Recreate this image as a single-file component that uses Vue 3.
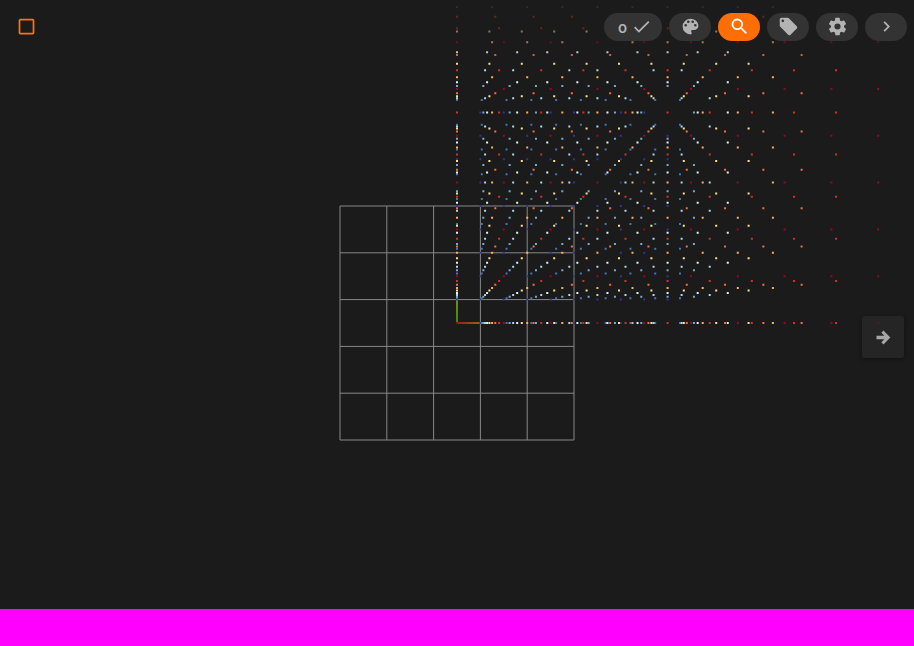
<script setup>
import { ref } from 'vue'

const SPAN = 421.2
const palette = [
  '#a50026', '#d73027', '#f46d43', '#fdae61', '#fee090',
  '#e0f3f8', '#abd9e9', '#74add1', '#4575b4', '#313695',
]

// One 10 x 10 lattice per colour. Where lattices share a position,
// the widest one keeps the point.
const taken = new Set()
const lattices = palette
  .map((color, n) => {
    const step = SPAN / (n + 9)
    let d = ''
    for (let i = 0; i < 10; i++) {
      for (let j = 0; j < 10; j++) {
        const x = (i * step - 1).toFixed(2)
        const y = (-j * step - 1).toFixed(2)
        const key = `${x} ${y}`
        if (taken.has(key)) continue
        taken.add(key)
        d += `M${key}h2v2h-2z`
      }
    }
    return { color, d }
  })
  .reverse()

const gridStops = [-117, -70.2, -23.4, 23.4, 70.2, 117]

const icons = {
  check: 'M21,7L9,19L3.5,13.5L4.91,12.09L9,16.17L19.59,5.59L21,7Z',
  palette:
    'M17.5,12A1.5,1.5 0 0,1 16,10.5A1.5,1.5 0 0,1 17.5,9A1.5,1.5 0 0,1 19,10.5A1.5,1.5 0 0,1 17.5,12M14.5,8A1.5,1.5 0 0,1 13,6.5A1.5,1.5 0 0,1 14.5,5A1.5,1.5 0 0,1 16,6.5A1.5,1.5 0 0,1 14.5,8M9.5,8A1.5,1.5 0 0,1 8,6.5A1.5,1.5 0 0,1 9.5,5A1.5,1.5 0 0,1 11,6.5A1.5,1.5 0 0,1 9.5,8M6.5,12A1.5,1.5 0 0,1 5,10.5A1.5,1.5 0 0,1 6.5,9A1.5,1.5 0 0,1 8,10.5A1.5,1.5 0 0,1 6.5,12M12,3A9,9 0 0,0 3,12A9,9 0 0,0 12,21A1.5,1.5 0 0,0 13.5,19.5C13.5,19.11 13.35,18.76 13.11,18.5C12.88,18.23 12.73,17.88 12.73,17.5A1.5,1.5 0 0,1 14.23,16H16A5,5 0 0,0 21,11C21,6.58 16.97,3 12,3Z',
  search:
    'M15.5,14H14.71L14.43,13.73A6.5,6.5 0 1,0 13.73,14.43L14,14.71V15.5L19,20.49L20.49,19L15.5,14M9.5,14A4.5,4.5 0 1,1 14,9.5A4.5,4.5 0 0,1 9.5,14Z',
  tag: 'M5.5,7A1.5,1.5 0 0,1 4,5.5A1.5,1.5 0 0,1 5.5,4A1.5,1.5 0 0,1 7,5.5A1.5,1.5 0 0,1 5.5,7M21.41,11.58L12.41,2.58C12.05,2.22 11.55,2 11,2H4C2.89,2 2,2.89 2,4V11C2,11.55 2.22,12.05 2.59,12.41L11.58,21.41C11.95,21.77 12.45,22 13,22C13.55,22 14.05,21.77 14.41,21.41L21.41,14.41C21.78,14.05 22,13.55 22,13C22,12.44 21.77,11.94 21.41,11.58Z',
  cog: 'M12,15.5A3.5,3.5 0 0,1 8.5,12A3.5,3.5 0 0,1 12,8.5A3.5,3.5 0 0,1 15.5,12A3.5,3.5 0 0,1 12,15.5M19.43,12.97C19.47,12.65 19.5,12.33 19.5,12C19.5,11.67 19.47,11.34 19.43,11L21.54,9.37C21.73,9.22 21.78,8.95 21.66,8.73L19.66,5.27C19.54,5.05 19.27,4.96 19.05,5.05L16.56,6.05C16.04,5.66 15.5,5.32 14.87,5.07L14.5,2.42C14.46,2.18 14.25,2 14,2H10C9.75,2 9.54,2.18 9.5,2.42L9.13,5.07C8.5,5.32 7.96,5.66 7.44,6.05L4.95,5.05C4.73,4.96 4.46,5.05 4.34,5.27L2.34,8.73C2.21,8.95 2.27,9.22 2.46,9.37L4.57,11C4.53,11.34 4.5,11.67 4.5,12C4.5,12.33 4.53,12.65 4.57,12.97L2.46,14.63C2.27,14.78 2.21,15.05 2.34,15.27L4.34,18.73C4.46,18.95 4.73,19.03 4.95,18.95L7.44,17.94C7.96,18.34 8.5,18.68 9.13,18.93L9.5,21.58C9.54,21.82 9.75,22 10,22H14C14.25,22 14.46,21.82 14.5,21.58L14.87,18.93C15.5,18.67 16.04,18.34 16.56,17.94L19.05,18.95C19.27,19.03 19.54,18.95 19.66,18.73L21.66,15.27C21.78,15.05 21.73,14.78 21.54,14.63L19.43,12.97Z',
  chevron: 'M8.59,16.58L13.17,12L8.59,7.41L10,6L16,12L10,18L8.59,16.58Z',
  arrow: 'M4,10V14H13L9.5,17.5L11.92,19.92L19.84,12L11.92,4.08L9.5,6.5L13,10H4Z',
  box: 'M19,3H5C3.89,3 3,3.89 3,5V19A2,2 0 0,0 5,21H19A2,2 0 0,0 21,19V5C21,3.89 20.1,3 19,3M19,5V19H5V5H19Z',
}

const tools = [
  { id: 'palette', label: 'Colors' },
  { id: 'search', label: 'Search' },
  { id: 'tag', label: 'Labels' },
  { id: 'cog', label: 'Settings' },
  { id: 'chevron', label: 'More' },
]
const active = ref('search')
</script>

<template>
  <div class="viewer">
    <svg class="scene" viewBox="-457 -323 914 646" aria-hidden="true">
      <defs>
        <linearGradient id="axis-x" gradientUnits="userSpaceOnUse" x1="0" y1="0" x2="24" y2="0">
          <stop offset="0" stop-color="#8e2412" />
          <stop offset="1" stop-color="#8e6a12" />
        </linearGradient>
        <linearGradient id="axis-y" gradientUnits="userSpaceOnUse" x1="0" y1="0" x2="0" y2="-24">
          <stop offset="0" stop-color="#2e8e12" />
          <stop offset="1" stop-color="#7a8e12" />
        </linearGradient>
      </defs>
      <g class="grid">
        <template v-for="s in gridStops" :key="s">
          <line :x1="s" y1="-117" :x2="s" y2="117" />
          <line x1="-117" :y1="s" x2="117" :y2="s" />
        </template>
      </g>
      <rect x="0" y="-1" width="24" height="2" fill="url(#axis-x)" />
      <rect x="-1" y="-24" width="2" height="24" fill="url(#axis-y)" />
      <path v-for="l in lattices" :key="l.color" :d="l.d" :fill="l.color" />
    </svg>

    <header class="topbar">
      <button class="select" type="button" aria-label="Selection">
        <svg class="icon" viewBox="0 0 24 24"><path :d="icons.box" /></svg>
      </button>
      <nav class="tools">
        <button class="pill count" type="button">
          <span class="number">o</span>
          <svg class="icon" viewBox="0 0 24 24"><path :d="icons.check" /></svg>
        </button>
        <button
          v-for="t in tools"
          :key="t.id"
          class="pill"
          :class="{ active: active === t.id }"
          type="button"
          :aria-label="t.label"
          @click="active = t.id"
        >
          <svg class="icon" viewBox="0 0 24 24"><path :d="icons[t.id]" /></svg>
        </button>
      </nav>
    </header>

    <main class="stage">
      <button class="next" type="button" aria-label="Next">
        <svg class="icon" viewBox="0 0 24 24"><path :d="icons.arrow" /></svg>
      </button>
    </main>

    <footer class="strip"></footer>
  </div>
</template>

<style>
body {
  background: #1b1b1b;
}
</style>

<style scoped>
.viewer {
  position: relative;
  display: flex;
  flex-direction: column;
  min-height: 100vh;
  overflow: hidden;
  background: #1b1b1b;
  font-family: Roboto, "Liberation Sans", sans-serif;
}

.scene {
  position: absolute;
  inset: 0;
  width: 100%;
  height: 100%;
}

.grid line {
  stroke: #888;
  stroke-width: 1;
}

.topbar {
  position: relative;
  display: flex;
  align-items: flex-start;
  justify-content: space-between;
  padding: 13px 7px 24px 16px;
  background: linear-gradient(#1b1b1b, rgba(27, 27, 27, 0));
}

button {
  box-sizing: border-box;
  display: flex;
  align-items: center;
  justify-content: center;
  padding: 0;
  border: 0;
  color: #b3b3b3;
  font: inherit;
  cursor: pointer;
}

.icon {
  width: 21px;
  height: 21px;
  fill: currentColor;
}

.select,
.pill {
  height: 28px;
  padding-bottom: 1px;
}

.select {
  background: none;
  color: #ff720d;
}

.tools {
  display: flex;
  gap: 7px;
}

.pill {
  width: 42px;
  border-radius: 14px;
  background: #333;
}

.pill.active {
  background: #ff6e05;
  color: #fff;
}

.pill.count {
  gap: 4px;
  width: 58px;
  padding-left: 4px;
}

.number {
  padding-top: 3px;
  font-size: 16px;
  font-weight: 500;
  line-height: 20px;
}

.stage {
  position: relative;
  display: flex;
  flex: 1;
  align-items: center;
  justify-content: flex-end;
  padding-right: 10px;
}

.next {
  width: 42px;
  height: 42px;
  border-radius: 3px;
  background: rgba(42, 42, 42, 0.75);
  color: #a6a6a6;
  box-shadow: 0 1px 4px rgba(0, 0, 0, 0.4);
}

.strip {
  position: relative;
  height: 37px;
  background: #f0f;
}
</style>
